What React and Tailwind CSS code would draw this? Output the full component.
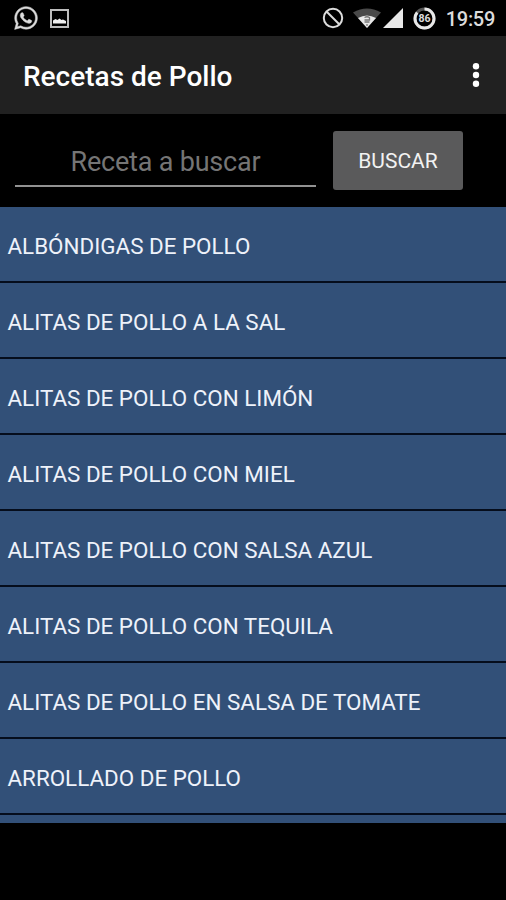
import React, { useState } from 'react';
import { FaWhatsapp } from 'react-icons/fa';

const recetas = [
  'ALBÓNDIGAS DE POLLO',
  'ALITAS DE POLLO A LA SAL',
  'ALITAS DE POLLO CON LIMÓN',
  'ALITAS DE POLLO CON MIEL',
  'ALITAS DE POLLO CON SALSA AZUL',
  'ALITAS DE POLLO CON TEQUILA',
  'ALITAS DE POLLO EN SALSA DE TOMATE',
  'ARROLLADO DE POLLO',
];

const StatusBar = () => (
  <div className="flex h-9 shrink-0 items-center justify-between pl-[13px] pr-[11px] text-[#dcdcdc]">
    <div className="flex items-center gap-[11px]">
      <FaWhatsapp className="h-[26px] w-[26px]" stroke="currentColor" strokeWidth="10" />
      <svg className="h-[19px] w-[19px]" viewBox="0 0 19 19" fill="none">
        <rect x="1" y="1" width="17" height="17" stroke="#bdbdbd" strokeWidth="2" />
        <path d="M3 14.500v-3l2.500-1.500 2 1 2-1.500 2 1.500 1.500-.5 3 1.500v2.500z" fill="#f0f0f0" />
      </svg>
    </div>

    <div className="flex items-center">
      <svg className="h-[22px] w-[22px]" viewBox="0 0 22 22" fill="none" stroke="currentColor" strokeWidth="2">
        <circle cx="11" cy="11" r="9.2" />
        <path d="M4.5 4.5l13 13" />
      </svg>
      {/* Wifi */}
      <svg className="ml-[9px] h-5 w-7" viewBox="0 0 28 20">
        <path d="M0 4.5Q14-3.5 28 4.5L14 20z" fill="#494949" />
        <path d="M5 10Q14 5 23 10L14 20z" fill="#e8e8e8" />
        <path d="M11.500 9.500q2.500-1.500 5 0v2.500h-5M11.500 14h5M14 16v2" stroke="#777" strokeWidth="1.300" fill="none" />
      </svg>
      {/* Señal */}
      <svg className="ml-0.5 h-5 w-5" viewBox="0 0 20 20">
        <path d="M20 0v20H0z" fill="#e8e8e8" />
      </svg>
      {/* Batería */}
      <svg className="ml-[10px] h-[23px] w-[23px]" viewBox="0 0 23 23">
        <circle cx="11.500" cy="11.500" r="9.500" fill="none" stroke="#555" strokeWidth="3" />
        <circle
          cx="11.500"
          cy="11.500"
          r="9.500"
          fill="none"
          stroke="#e8e8e8"
          strokeWidth="3"
          pathLength="100"
          strokeDasharray="86 14"
          transform="rotate(-90 11.500 11.500)"
        />
        <text x="11.500" y="15.300" textAnchor="middle" fontSize="10.500" fontWeight="700" fill="#dcdcdc">
          86
        </text>
      </svg>
      <span className="ml-[10px] pt-0.5 text-[20px] font-medium leading-none tracking-[-0.3px]">19:59</span>
    </div>
  </div>
);

const Header = () => (
  <header className="flex h-[78px] shrink-0 items-center justify-between bg-[#212121] pl-[23px] pr-6">
    <h1 className="pt-[3px] text-[28px] font-medium leading-none text-white">Recetas de Pollo</h1>
    <button aria-label="Menú">
      <svg className="h-6 w-3" viewBox="0 0 12 24" fill="white">
        <circle cx="6" cy="3.300" r="3.200" />
        <circle cx="6" cy="12" r="3.200" />
        <circle cx="6" cy="20.700" r="3.200" />
      </svg>
    </button>
  </header>
);

const App = () => {
  const [busqueda, setBusqueda] = useState('');

  return (
    <div className="flex h-[900px] w-[506px] flex-col overflow-hidden bg-black font-['Roboto',sans-serif]">
      <StatusBar />
      <Header />

      {/* Buscador */}
      <div className="flex h-[93px] shrink-0 items-start pl-[15px] pt-[17px]">
        <input
          value={busqueda}
          onChange={(e) => setBusqueda(e.target.value)}
          placeholder="Receta a buscar"
          className="h-[56px] w-[301px] border-b-2 border-[#929292] bg-transparent pt-[7px] text-center text-[27px] tracking-[-0.2px] text-white outline-none placeholder:text-[#757575]"
        />
        <button className="ml-[17px] h-[59px] w-[130px] rounded-[3px] bg-[#5a5a5b] pt-[3px] text-[21px] text-[#f2f2f2]">
          BUSCAR
        </button>
      </div>

      {/* Lista */}
      <ul className="h-[616px] shrink-0 overflow-hidden bg-[#325078]">
        {recetas.map((receta) => (
          <li
            key={receta}
            className="flex h-[75.950px] items-center border-b-2 border-[#050d1c] pl-[7.500px] pt-[5px] text-[22.400px] leading-none text-[#eef2fa]"
          >
            {receta}
          </li>
        ))}
      </ul>
    </div>
  );
};

export default App;
